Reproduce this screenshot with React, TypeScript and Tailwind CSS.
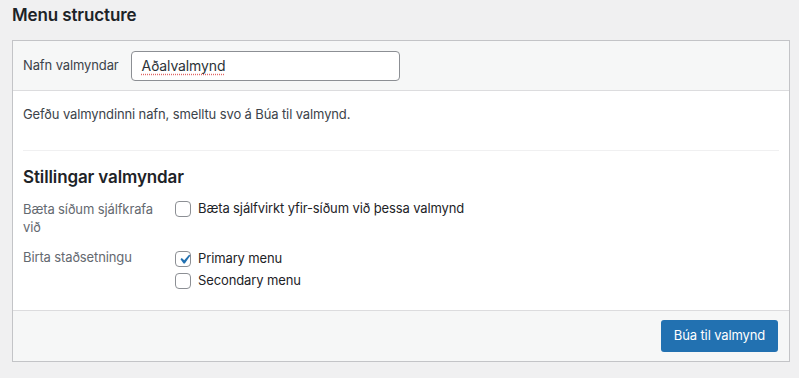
import React from "react";

const font = { fontFamily: "Inter, 'Noto Sans', 'Liberation Sans', sans-serif", letterSpacing: "-0.12px" };

function Checkbox({ checked }: { checked?: boolean }) {
  return (
    <span className="relative flex h-4 w-4 shrink-0 items-center justify-center rounded-[4px] border border-[#8c8f94] bg-white">
      {checked && (
        <svg viewBox="0 0 20 20" className="absolute -left-[1px] -top-[2px] h-[19px] w-[19px]">
          <path d="M14.83 4.89l1.34.94-5.81 8.38H9.02L5.78 9.67l1.34-1.25 2.57 2.4z" fill="#2271b1" />
        </svg>
      )}
    </span>
  );
}

function Option({ label, checked }: { label: string; checked?: boolean }) {
  return (
    <label className="flex h-[22px] items-center gap-[7px]">
      <Checkbox checked={checked} />
      <span className="text-[13px] text-[#1d2327]">{label}</span>
    </label>
  );
}

export default function App() {
  return (
    <div className="min-h-[378px] w-[799px] bg-[#f0f0f1] px-3 pt-[3px]" style={font}>
      <h2 className="h-[37px] pt-[1px] text-[17px] font-semibold leading-[22px] text-[#1d2327]">
        Menu structure
      </h2>

      <div className="w-[778px] border border-[#c3c4c7] bg-white">
        <div className="flex h-[50px] items-center gap-3 border-b border-[#dcdcde] bg-[#f6f7f7] px-[10px]">
          <span className="text-[13px] text-[#3c434a]">Nafn valmyndar</span>
          <div className="flex h-[30px] w-[269px] items-center rounded-[4px] border border-[#8c8f94] bg-white px-[10px]">
            <span className="text-[14px] text-[#2c3338] underline decoration-[#e06666] decoration-dotted underline-offset-[3px]">
              Aðalvalmynd
            </span>
          </div>
        </div>

        <div className="px-[10px] pb-[18px] pt-[14px]">
          <p className="text-[13px] leading-[19.5px] text-[#3c434a]">
            Gefðu valmyndinni nafn, smelltu svo á Búa til valmynd.
          </p>
          <div className="mt-[25px] border-t border-[#f0f0f1]" />
          <h3 className="mt-[15px] text-[17px] font-semibold leading-[22px] text-[#1d2327]">
            Stillingar valmyndar
          </h3>

          <div className="mt-3 grid grid-cols-[152px_1fr] gap-y-3 text-[13px]">
            <div className="w-[140px] leading-[18px] text-[#646970]">Bæta síðum sjálfkrafa við</div>
            <div className="-mt-[2px]">
              <Option label="Bæta sjálfvirkt yfir-síðum við þessa valmynd" />
            </div>

            <div className="leading-[18px] text-[#646970]">Birta staðsetningu</div>
            <div className="flex flex-col">
              <Option label="Primary menu" checked />
              <Option label="Secondary menu" />
            </div>
          </div>
        </div>

        <div className="flex h-[51px] items-center justify-end border-t border-[#dcdcde] bg-[#f6f7f7] px-[11px]">
          <button className="h-8 w-[117px] rounded-[3px] bg-[#2271b1] text-[13px] text-white">
            Búa til valmynd
          </button>
        </div>
      </div>
    </div>
  );
}
